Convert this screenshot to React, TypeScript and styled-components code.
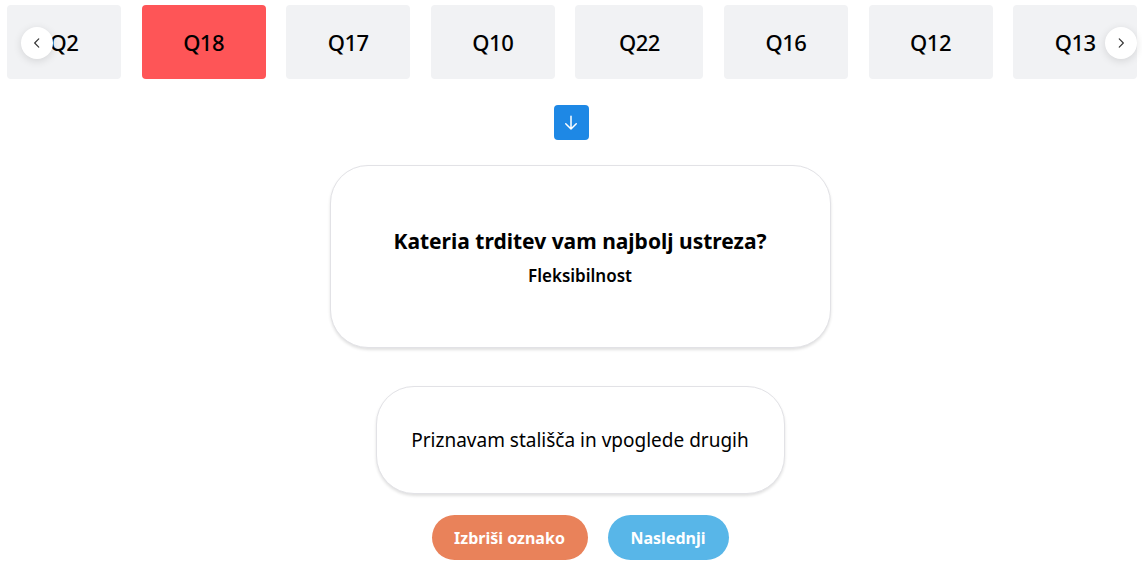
import React from "react";
import styled, { createGlobalStyle } from "styled-components";

const GlobalStyle = createGlobalStyle`
  html, body {
    margin: 0;
    padding: 0;
    background: #ffffff;
    font-family: "Noto Sans", "Open Sans", sans-serif;
    color: #000;
  }
`;

const Page = styled.div`
  width: 1142px;
  height: 565px;
  display: flex;
  flex-direction: column;
  align-items: center;
  overflow: hidden;
`;

const Carousel = styled.div`
  position: relative;
  width: 100%;
  height: 79px;
  padding-top: 5px;
  box-sizing: border-box;
`;

const Track = styled.div`
  display: flex;
  gap: 20.6px;
  padding-left: 7px;
  overflow: hidden;
`;

const Tile = styled.div<{ $active?: boolean; $w: number }>`
  flex: 0 0 ${(p) => p.$w}px;
  height: 74px;
  border-radius: 4px;
  background: ${(p) => (p.$active ? "#fe5557" : "#f1f2f4")};
  display: flex;
  align-items: center;
  justify-content: center;
  font-size: 22px;
  font-weight: 500;
  letter-spacing: -0.5px;
`;

const NavButton = styled.button<{ $side: "left" | "right" }>`
  position: absolute;
  top: 27px;
  ${(p) => (p.$side === "left" ? "left: 21px;" : "right: 5px;")}
  width: 32px;
  height: 32px;
  border-radius: 50%;
  border: none;
  padding: 0;
  background: #fff;
  box-shadow: 0 2px 8px rgba(0, 0, 0, 0.12);
  display: flex;
  align-items: center;
  justify-content: center;
  color: #333;
`;

const DownButton = styled.div`
  margin-top: 26px;
  width: 35px;
  height: 35px;
  border-radius: 4px;
  background: #1e88e5;
  display: flex;
  align-items: center;
  justify-content: center;
`;

const Content = styled.div`
  display: flex;
  flex-direction: column;
  align-items: center;
  padding-left: 18px;
`;

const Card = styled.div<{ $w: number; $h: number }>`
  width: ${(p) => p.$w}px;
  height: ${(p) => p.$h}px;
  box-sizing: border-box;
  border: 1px solid #e2e2e6;
  border-radius: 38px;
  box-shadow: 0 2px 3px rgba(0, 0, 0, 0.12);
  display: flex;
  flex-direction: column;
  align-items: center;
  justify-content: center;
  background: #fff;
`;

const QuestionCard = styled(Card)`
  margin-top: 25px;
  gap: 9px;
`;

const AnswerCard = styled(Card)`
  margin-top: 38px;
`;

const Title = styled.div`
  font-size: 21px;
  font-weight: 700;
`;

const Subtitle = styled.div`
  font-size: 17px;
  font-weight: 600;
`;

const AnswerText = styled.div`
  font-size: 19px;
  font-weight: 400;
`;

const Actions = styled.div`
  margin-top: 21px;
  display: flex;
  gap: 20px;
`;

const Pill = styled.button<{ $color: string; $w: number }>`
  width: ${(p) => p.$w}px;
  height: 45px;
  border: none;
  border-radius: 23px;
  background: ${(p) => p.$color};
  color: #fff;
  font-family: inherit;
  font-size: 16px;
  font-weight: 700;
`;

const tiles = [
  { label: "Q2", w: 114 },
  { label: "Q18", w: 124, active: true },
  { label: "Q17", w: 124 },
  { label: "Q10", w: 124 },
  { label: "Q22", w: 128 },
  { label: "Q16", w: 124 },
  { label: "Q12", w: 124 },
  { label: "Q13", w: 124 },
];

export default function App() {
  return (
    <Page>
      <GlobalStyle />
      <Carousel>
        <Track>
          {tiles.map((t) => (
            <Tile key={t.label} $w={t.w} $active={t.active}>
              {t.label}
            </Tile>
          ))}
        </Track>
        <NavButton $side="left" aria-label="Prejšnji">
          <svg width="14" height="14" viewBox="0 0 24 24" fill="none" stroke="#333" strokeWidth="2" strokeLinecap="round" strokeLinejoin="round">
            <path d="M15 5l-7 7 7 7" />
          </svg>
        </NavButton>
        <NavButton $side="right" aria-label="Naslednji">
          <svg width="14" height="14" viewBox="0 0 24 24" fill="none" stroke="#333" strokeWidth="2" strokeLinecap="round" strokeLinejoin="round">
            <path d="M9 5l7 7-7 7" />
          </svg>
        </NavButton>
      </Carousel>
      <DownButton>
        <svg width="18" height="18" viewBox="0 0 24 24" fill="none" stroke="#fff" strokeWidth="2" strokeLinecap="round" strokeLinejoin="round">
          <path d="M12 3v17M5 13l7 7 7-7" />
        </svg>
      </DownButton>
      <Content>
        <QuestionCard $w={501} $h={183}>
          <Title>Kateria trditev vam najbolj ustreza?</Title>
          <Subtitle>Fleksibilnost</Subtitle>
        </QuestionCard>
        <AnswerCard $w={409} $h={108}>
          <AnswerText>Priznavam stališča in vpoglede drugih</AnswerText>
        </AnswerCard>
        <Actions>
          <Pill $color="#e9825a" $w={156}>Izbriši oznako</Pill>
          <Pill $color="#58b6e8" $w={121}>Naslednji</Pill>
        </Actions>
      </Content>
    </Page>
  );
}
